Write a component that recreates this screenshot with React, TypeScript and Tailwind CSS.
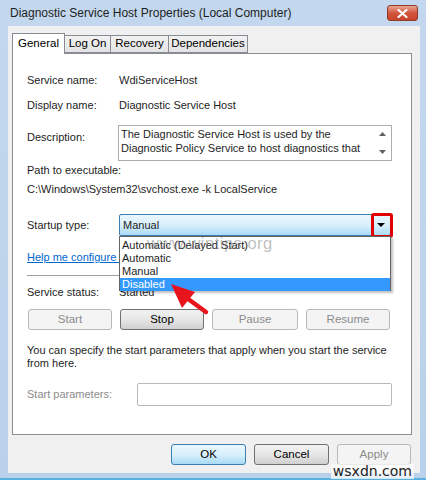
import React from "react";

const FONT = { fontFamily: '"Liberation Sans", Arial, sans-serif' };

function Btn({ label, w, kind }: { label: string; w: string; kind: "normal" | "disabled" | "focus" }) {
  const cls =
    kind === "disabled"
      ? "border-[#b5b9bd] bg-[#f4f4f4] text-[#8b8b8b]"
      : kind === "focus"
      ? "border-[#3c7fb1] bg-gradient-to-b from-[#eaf6fd] via-[#d9f0fc] to-[#a7d9f5] text-black"
      : "border-[#707070] bg-gradient-to-b from-[#f2f2f2] via-[#e6e6e6] to-[#d0d0d0] text-black";
  return (
    <div className={`${w} h-[21px] border rounded-[3px] flex items-center justify-center text-[11.5px] ${cls}`}>
      {label}
    </div>
  );
}

export default function App() {
  return (
    <div
      className="relative w-[426px] h-[480px] overflow-hidden bg-gradient-to-b from-[#c3d8ee] to-[#b9d1ea] text-[11px] text-black"
      style={FONT}
    >
      {/* title bar */}
      <div className="h-[26px] flex items-center pl-[10px] pr-[8px]">
        <span className="flex-1 text-[12px] text-[#1e1e1e]">Diagnostic Service Host Properties (Local Computer)</span>
        <div className="w-[31px] h-[16px] rounded-[3px] border border-[#8e3b2a] bg-gradient-to-b from-[#e8a493] via-[#d2543c] to-[#c9442c] flex items-center justify-center">
          <svg width="11" height="9" viewBox="0 0 11 9">
            <path d="M1.5 1 L9.5 8 M9.5 1 L1.5 8" stroke="#fff" strokeWidth="2.2" strokeLinecap="round" />
          </svg>
        </div>
      </div>

      {/* client area */}
      <div className="ml-[8px] w-[412px] h-[447px] bg-[#f0f0f0] pt-[7px] pl-[4px] flex flex-col">
        {/* tabs */}
        <div className="flex items-end h-[20px] text-[11.5px]">
          <div className="w-[53px] h-[21px] bg-white border border-b-0 border-[#898c95] flex items-center justify-center -mb-px z-10 relative">
            General
          </div>
          {[
            ["Log On", "w-[47px]"],
            ["Recovery", "w-[59px]"],
            ["Dependencies", "w-[80px]"],
          ].map(([t, w]) => (
            <div
              key={t}
              className={`${w} h-[18px] -ml-px first:ml-0 border border-[#898c95] bg-gradient-to-b from-[#f2f2f2] to-[#e3e3e3] flex items-center justify-center`}
            >
              {t}
            </div>
          ))}
        </div>

        {/* panel */}
        <div className="w-[400px] h-[382px] bg-white border border-[#898c95] pl-[14px] pt-[18px] text-[#1e1e1e]">
          <div className="flex h-[16px] items-center">
            <span className="w-[92px]">Service name:</span>
            <span>WdiServiceHost</span>
          </div>
          <div className="flex h-[16px] items-center mt-[9px]">
            <span className="w-[92px]">Display name:</span>
            <span>Diagnostic Service Host</span>
          </div>
          <div className="flex mt-[12px]">
            <span className="w-[91px] pt-[4px]">Description:</span>
            <div className="w-[274px] h-[36px] border border-[#abadb3] flex">
              <div className="flex-1 pl-[2px] pt-px leading-[14px]">
                The Diagnostic Service Host is used by the Diagnostic Policy Service to host diagnostics that
              </div>
              <div className="w-[17px] flex flex-col items-center justify-between py-[6px]">
                <svg width="7" height="4" viewBox="0 0 7 4"><path d="M0 4 L3.5 0 L7 4Z" fill="#606060" /></svg>
                <svg width="7" height="4" viewBox="0 0 7 4"><path d="M0 0 L3.5 4 L7 0Z" fill="#606060" /></svg>
              </div>
            </div>
          </div>
          <div className="mt-[1px] h-[16px] flex items-center">Path to executable:</div>
          <div className="mt-[3px] h-[16px] flex items-center">C:\Windows\System32\svchost.exe -k LocalService</div>

          <div className="flex items-center mt-[17px]">
            <span className="w-[92px]">Startup type:</span>
            <div className="relative w-[272px] h-[22px] border border-[#3c7fb1] rounded-[2px] bg-gradient-to-b from-[#eaf6fd] via-[#d9f0fc] to-[#a9dbf6] flex items-center pl-[3px]">
              <span className="flex-1">Manual</span>
              <div className="w-[18px] flex items-center justify-center">
                <svg width="8" height="4" viewBox="0 0 8 4"><path d="M0 0 L4 4 L8 0Z" fill="#000" /></svg>
              </div>
              {/* red highlight */}
              <div className="absolute right-[-3px] top-[-2px] w-[22px] h-[25px] border-[3px] border-[#e00000] rounded-[3px]" />
              {/* dropdown list */}
              <div className="absolute left-[-1px] top-[21px] w-[272px] h-[55px] bg-white border border-[#646464] shadow-[2px_2px_2px_rgba(0,0,0,0.25)] z-20 flex flex-col pt-px">
                <div className="h-[14px] leading-[14px] pl-[2px]">Automatic (Delayed Start)</div>
                <div className="h-[13px] leading-[13px] pl-[2px]">Automatic</div>
                <div className="h-[13px] leading-[13px] pl-[2px]">Manual</div>
                <div className="h-[13px] leading-[13px] pl-[2px] bg-[#3399ff] text-white">Disabled</div>
              </div>
            </div>
          </div>

          <div className="mt-[13px] h-[16px] flex items-center">
            <span className="text-[#0066cc] underline">Help me configure service startup options.</span>
          </div>
          <div className="mt-[10px] w-[363px] border-t border-[#a0a0a0]" />

          <div className="flex h-[16px] items-center mt-[8px]">
            <span className="w-[92px]">Service status:</span>
            <span>Started</span>
          </div>

          <div className="flex gap-[8px] mt-[9px] ml-px">
            <Btn label="Start" w="w-[84px]" kind="disabled" />
            <Btn label="Stop" w="w-[84px]" kind="normal" />
            <Btn label="Pause" w="w-[86px]" kind="disabled" />
            <Btn label="Resume" w="w-[84px]" kind="disabled" />
          </div>

          <div className="mt-[14px] leading-[13px] w-[370px]">
            You can specify the start parameters that apply when you start the service from here.
          </div>

          <div className="flex items-center mt-[13px]">
            <span className="w-[110px] text-[#8b8b8b]">Start parameters:</span>
            <div className="w-[255px] h-[23px] border border-[#b5b9bd] rounded-[2px] bg-white" />
          </div>
        </div>

        {/* bottom buttons */}
        <div className="flex justify-end gap-[8px] mt-[9px] pr-[9px]">
          <Btn label="OK" w="w-[75px]" kind="focus" />
          <Btn label="Cancel" w="w-[75px]" kind="normal" />
          <Btn label="Apply" w="w-[74px]" kind="disabled" />
        </div>
      </div>

      {/* bottom frame edge */}
      <div className="absolute left-0 right-0 bottom-0 h-[2px] bg-[#5ab0de]" />

      {/* watermark */}
      <div className="absolute left-[147px] top-[231px] text-[16.5px] tracking-[0.5px] text-[#6e6e6e]/45 z-30 pointer-events-none">
        www.wintips.org
      </div>

      {/* red arrow */}
      <svg className="absolute left-[160px] top-[276px] z-30" width="60" height="45" viewBox="0 0 60 45">
        <path d="M46 36 L24 20" stroke="#e8141c" strokeWidth="4.5" strokeLinecap="round" />
        <path d="M11 8 L35 16 L22 32 Z" fill="#e8141c" />
      </svg>

      {/* site stamp */}
      <div className="absolute right-[12px] bottom-[1px] px-[2px] bg-white/70 text-[14px] leading-[15px] text-[#222]" style={{ fontFamily: '"DejaVu Sans", sans-serif' }}>
        wsxdn.com
      </div>
    </div>
  );
}
